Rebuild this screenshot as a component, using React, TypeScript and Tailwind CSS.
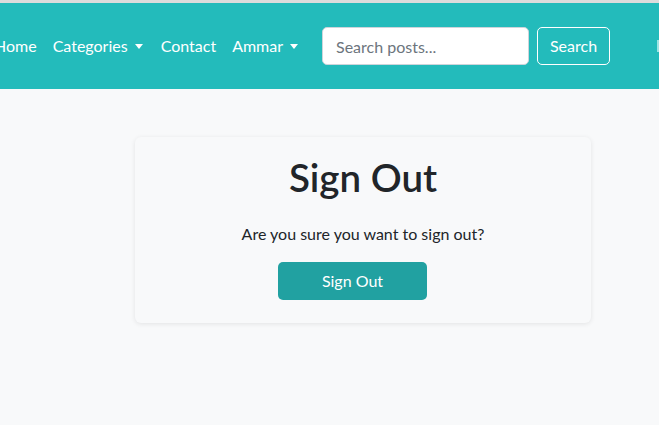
import React from "react";

function Caret() {
  return (
    <span className="ml-[7px] inline-block h-0 w-0 border-x-[4.5px] border-t-[5px] border-x-transparent border-t-white align-middle" />
  );
}

export default function App() {
  return (
    <div
      className="h-[425px] w-[659px] overflow-hidden bg-[#f8f9fa] text-[#212529]"
      style={{ fontFamily: 'Lato, "Noto Sans", sans-serif' }}
    >
      <div className="h-[3px] bg-[#dcdcdc]" />
      <nav className="flex h-[86px] items-center overflow-hidden bg-[#23bbbb] text-[16px] text-white">
        <a className="ml-[-6px] shrink-0 whitespace-nowrap">Home</a>
        <a className="ml-[16px] flex shrink-0 items-center whitespace-nowrap">
          Categories
          <Caret />
        </a>
        <a className="ml-[18px] shrink-0 whitespace-nowrap">Contact</a>
        <a className="ml-[16px] flex shrink-0 items-center whitespace-nowrap">
          Ammar
          <Caret />
        </a>
        <form className="ml-[24px] flex shrink-0 items-center">
          <input
            className="h-[38px] w-[207px] rounded-[5px] border border-[#ced4da] bg-white px-[13px] text-[16px] text-[#212529] outline-none placeholder:text-[#6c757d]"
            placeholder="Search posts..."
          />
          <button
            type="button"
            className="ml-[8px] h-[38px] w-[73px] rounded-[5px] border border-white text-[16px] text-white"
          >
            Search
          </button>
        </form>
        <span className="ml-[47px] h-[12px] w-[3px] shrink-0 bg-[#9fe3e3]" />
      </nav>
      <div className="ml-[135px] mt-[48px] flex w-[456px] flex-col items-center rounded-[6px] bg-[#f8f9fa] px-4 pb-[23px] pt-4 shadow-[0_1px_5px_rgba(0,0,0,0.09)]">
        <h1 className="text-[38.5px] font-semibold leading-[48px]">Sign Out</h1>
        <p className="mt-[21px] text-[16px] leading-[24px]">Are you sure you want to sign out?</p>
        <button
          type="button"
          className="mr-[21px] mt-[16px] h-[38px] w-[149px] rounded-[5px] bg-[#21a1a1] text-[16px] text-white"
        >
          Sign Out
        </button>
      </div>
    </div>
  );
}
